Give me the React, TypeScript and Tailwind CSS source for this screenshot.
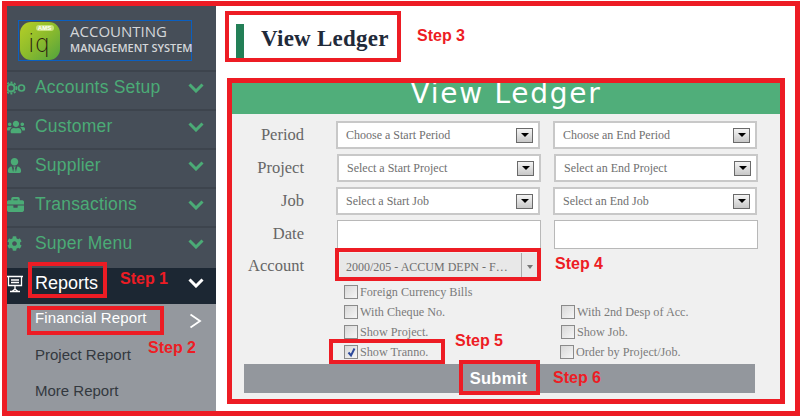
import type { ReactNode } from "react";
import { FaBriefcase, FaCog, FaUsers, FaUserTie } from "react-icons/fa";

function SetupIcon() {
    return (
        <svg width="21" height="14" viewBox="0 0 21 14" fill="none" stroke="currentColor" className="-ml-[2px]">
            <circle cx="6" cy="7" r="3.6" strokeWidth="2.2" />
            <circle cx="6" cy="7" r="5.6" strokeWidth="1.6" strokeDasharray="2 1.6" />
            <circle cx="16.5" cy="7" r="3" strokeWidth="1.7" />
        </svg>
    );
}

const menuItems = [
    { label: "Accounts Setup", icon: <SetupIcon /> },
    { label: "Customer", icon: <FaUsers size={18} /> },
    { label: "Supplier", icon: <FaUserTie size={15} /> },
    { label: "Transactions", icon: <FaBriefcase size={17} /> },
    { label: "Super Menu", icon: <FaCog size={15} /> }
];

function Chevron({ className }: { className: string }) {
    return (
        <svg width="16" height="10" viewBox="0 0 16 10" fill="none" stroke="currentColor" strokeWidth="3" className={className}>
            <path d="M1.5 1.5L8 8l6.5-6.5" />
        </svg>
    );
}

function Sidebar() {
    return (
        <aside className="w-[209px] h-[406px] shrink-0 flex flex-col bg-[#464e58] overflow-hidden font-['Liberation_Sans',sans-serif]">
            <div className="h-[65px] shrink-0 pt-[15px] pl-[11px]">
                <div className="w-[174px] h-[41px] border border-[#0a5fc0] flex items-center pl-[1px]">
                    <div className="relative w-[40px] h-[38px] rounded-[11px] bg-gradient-to-br from-[#b6cf26] via-[#8cbb2c] to-[#4fa23c] shrink-0 flex flex-col items-center">
                        <span className="mt-[3px] ml-[9px] w-[18px] h-[6px] rounded-sm bg-[#c7e07a] text-white text-[6px] leading-[6px] font-bold text-center">AMS</span>
                        <span className="-ml-[2px] text-[#2b1c10] text-[24px] leading-[26px] font-['DejaVu_Sans',sans-serif] font-extralight">iq</span>
                    </div>
                    <div className="ml-[10px] -mt-[3px] font-['Open_Sans',sans-serif] text-[#d4d6d9] whitespace-nowrap">
                        <div className="text-[15px] leading-[17px]">ACCOUNTING</div>
                        <div className="text-[11px] leading-[16px] font-semibold">MANAGEMENT SYSTEM</div>
                    </div>
                </div>
            </div>

            {menuItems.map((item) => (
                <div key={item.label} className="h-[39px] shrink-0 border-t-2 border-[#3d444d] flex items-center pb-[6px] text-[#4bab76]">
                    <span className="w-[28px] flex shrink-0">{item.icon}</span>
                    <span className="text-[17.5px] tracking-[0.2px]">{item.label}</span>
                    <Chevron className="ml-auto mr-[12px]" />
                </div>
            ))}

            <div className="h-[3px] shrink-0 bg-[#464e58]" />
            <div className="h-[36px] shrink-0 bg-[#1c2733] flex items-center pb-[6px] text-white">
                <svg width="16" height="19" viewBox="0 0 16 19" fill="none" stroke="currentColor" strokeWidth="1.3" className="shrink-0 mr-[12px]">
                    <path d="M0 2.5h16M1.5 2.5v9h13v-9M4 6h8M4 8.5h8M8 11.5v3.5M3 17.5h10M8 15l-3 2.5M8 15l3 2.5" />
                </svg>
                <span className="text-[18px]">Reports</span>
                <Chevron className="ml-auto mr-[12px]" />
            </div>
            <div className="flex-1 bg-[#94989e] flex flex-col pl-[28px] text-[15px]">
                <div className="h-[33px] flex items-center justify-between pr-[14px] text-white">
                    <span className="-mt-[5px] tracking-[0.15px]">Financial Report</span>
                    <svg width="13" height="16" viewBox="0 0 13 16" fill="none" stroke="currentColor" strokeWidth="1.8">
                        <path d="M1.5 1.5L11 8l-9.5 6.5" />
                    </svg>
                </div>
                <div className="h-[36px] flex items-center text-[#33383e]">Project Report</div>
                <div className="h-[36px] flex items-center text-[#33383e]">More Report</div>
            </div>
        </aside>
    );
}

function SelectBox({ text, className }: { text: string; className: string }) {
    return (
        <div className={`h-[28px] border-2 border-[#c8c8c8] bg-white flex items-center pl-[8px] pr-[5px] text-[12px] text-[#6f6f6f] ${className}`}>
            <span>{text}</span>
            <span className="ml-auto w-[17px] h-[15px] border border-[#6a6a6a] bg-gradient-to-b from-[#f4f4f4] to-[#c8c8c8] flex items-center justify-center">
                <span className="w-0 h-0 border-x-[4px] border-x-transparent border-t-[4px] border-t-black" />
            </span>
        </div>
    );
}

function FormRow({ label, className, children }: { label: string; className: string; children: ReactNode }) {
    return (
        <div className={`flex items-center ${className}`}>
            <span className="w-[72px] shrink-0 text-right text-[16.5px] text-[#666]">{label}</span>
            {children}
        </div>
    );
}

function Check({ label, checked, className }: { label: string; checked?: boolean; className?: string }) {
    return (
        <div className={`h-[20px] flex items-center text-[12.2px] text-[#7b7b7b] whitespace-nowrap ${className ?? ""}`}>
            <span className="w-[14px] h-[14px] border border-[#8a8a8a] bg-gradient-to-br from-[#d8d8d8] to-[#f6f6f6] mr-[2px] shrink-0 flex items-center justify-center">
                {checked && (
                    <svg width="11" height="11" viewBox="0 0 11 11" fill="none" stroke="#2d4a9c" strokeWidth="2">
                        <path d="M2.5 5.5L5 8.5 8.5 1.5" />
                    </svg>
                )}
            </span>
            {label}
        </div>
    );
}

function LedgerForm() {
    return (
        <section className="w-[548px] h-[316px] ml-[16px] mt-[25px] bg-[#f0f0f0] flex flex-col font-['Liberation_Serif',serif]">
            <div className="h-[31px] shrink-0 bg-[#50ae7a] text-center text-white text-[28px] leading-[21px] tracking-[1.75px] font-['DejaVu_Sans',sans-serif]">
                View Ledger
            </div>

            <FormRow label="Period" className="mt-[7px]">
                <SelectBox text="Choose a Start Period" className="ml-[32px] w-[204px]" />
                <SelectBox text="Choose an End Period" className="ml-[13px] w-[204px]" />
            </FormRow>
            <FormRow label="Project" className="mt-[5px]">
                <SelectBox text="Select a Start Project" className="ml-[33px] w-[204px]" />
                <SelectBox text="Select an End Project" className="ml-[13px] w-[204px]" />
            </FormRow>
            <FormRow label="Job" className="mt-[5px]">
                <SelectBox text="Select a Start Job" className="ml-[32px] w-[204px]" />
                <SelectBox text="Select an End Job" className="ml-[13px] w-[204px]" />
            </FormRow>
            <FormRow label="Date" className="mt-[5px]">
                <div className="ml-[33px] w-[204px] h-[29px] border border-[#b8b8b8] bg-white" />
                <div className="ml-[13px] w-[204px] h-[29px] border border-[#b8b8b8] bg-white" />
            </FormRow>
            <FormRow label="Account" className="mt-[4px]">
                <div className="ml-[36px] w-[197px] h-[27px] bg-[#e8e8e8] flex items-center pl-[6px] text-[12px] text-[#6f6f6f]">
                    <span>2000/205 - ACCUM DEPN - F…</span>
                    <span className="ml-auto w-[16px] h-full border-l border-[#aaa] flex items-center justify-center">
                        <span className="w-0 h-0 border-x-[3.5px] border-x-transparent border-t-[4px] border-t-[#777]" />
                    </span>
                </div>
            </FormRow>

            <div className="mt-[2px] ml-[112px] grid grid-cols-[217px_1fr] h-[81px]">
                <div className="flex flex-col">
                    <Check label="Foreign Currency Bills" />
                    <Check label="With Cheque No." />
                    <Check label="Show Project." />
                    <Check label="Show Tranno." checked />
                </div>
                <div className="flex flex-col pt-[20px]">
                    <Check label="With 2nd Desp of Acc." />
                    <Check label="Show Job." />
                    <Check label="Order by Project/Job." className="-ml-px" />
                </div>
            </div>

            <div className="ml-[12px] w-[511px] h-[29px] mt-[1px] bg-[#93979d] flex items-center justify-center text-white font-['Liberation_Sans',sans-serif] font-bold text-[16.5px] tracking-[0.3px]">
                <span className="-ml-[2px]">Submit</span>
            </div>
        </section>
    );
}

function Annotations() {
    return (
        <div className="absolute inset-0 pointer-events-none font-['Liberation_Sans',sans-serif] font-bold text-[16px] leading-none text-[#ed1c24]">
            {/* annotation frames drawn over the screenshot */}
            <div className="absolute left-[2px] top-[1px] w-[798px] h-[415px] border-[5px] border-[#ed1c24]" />
            <div className="absolute left-[227px] top-[78px] w-[558px] h-[326px] border-[5px] border-[#ed1c24]" />
            <div className="absolute left-[225px] top-[11px] w-[176px] h-[51px] border-[4px] border-[#ed1c24]" />
            <div className="absolute left-[28px] top-[262px] w-[79px] h-[36px] border-[4px] border-[#ed1c24]" />
            <div className="absolute left-[27px] top-[306px] w-[137px] h-[29px] border-[4px] border-[#ed1c24]" />
            <div className="absolute left-[335px] top-[248px] w-[206px] h-[33px] border-[4px] border-[#ed1c24]" />
            <div className="absolute left-[329px] top-[339px] w-[116px] h-[25px] border-[4px] border-[#ed1c24]" />
            <div className="absolute left-[459px] top-[360px] w-[81px] h-[35px] border-[4px] border-[#ed1c24]" />
            <span className="absolute left-[120px] top-[271px]">Step 1</span>
            <span className="absolute left-[148px] top-[340px]">Step 2</span>
            <span className="absolute left-[417px] top-[28px]">Step 3</span>
            <span className="absolute left-[555px] top-[256px]">Step 4</span>
            <span className="absolute left-[455px] top-[333px]">Step 5</span>
            <span className="absolute left-[553px] top-[370px]">Step 6</span>
        </div>
    );
}

export default function App() {
    return (
        <div className="relative w-[802px] h-[416px] bg-white overflow-hidden flex pl-[7px] pt-[5px]">
            <Sidebar />
            <main className="flex-1 flex flex-col font-['Liberation_Serif',serif]">
                <div className="h-[34px] mt-[19px] ml-[20px] flex items-start shrink-0">
                    <span className="w-[8px] h-[34px] bg-[#237f57]" />
                    <h1 className="ml-[17px] text-[23px] leading-[30px] font-bold text-[#1f2a3a] tracking-[0.25px]">View Ledger</h1>
                </div>
                <LedgerForm />
            </main>
            <Annotations />
        </div>
    );
}
